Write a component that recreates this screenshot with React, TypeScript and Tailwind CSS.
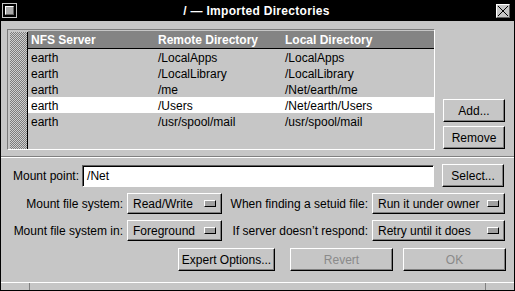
import React from "react";

const rows = [
  ["earth", "/LocalApps", "/LocalApps"],
  ["earth", "/LocalLibrary", "/LocalLibrary"],
  ["earth", "/me", "/Net/earth/me"],
  ["earth", "/Users", "/Net/earth/Users"],
  ["earth", "/usr/spool/mail", "/usr/spool/mail"],
];

const Btn = ({ label, w, dim }: { label: string; w: string; dim?: boolean }) => (
  <div
    className={`${w} h-[23px] flex items-center justify-center border border-t-white border-l-white border-r-black border-b-black shadow-[inset_-1px_-1px_0_#808080] ${
      dim ? "text-[#8a8a8a]" : "text-black"
    }`}
  >
    {label}
  </div>
);

const Popup = ({ label, w }: { label: string; w: string }) => (
  <div
    className={`${w} h-[21px] flex items-center justify-between pl-[5px] pr-[5px] border border-t-white border-l-white border-r-black border-b-black shadow-[inset_-1px_-1px_0_#808080]`}
  >
    <span>{label}</span>
    <span className="w-[12px] h-[7px] border border-t-white border-l-white border-r-black border-b-black bg-[#a0a0a0]" />
  </div>
);

export default function App() {
  return (
    <div className="w-[515px] h-[291px] border-x border-b border-black bg-[#c6c6c6] flex flex-col font-['Liberation_Sans',Arial,sans-serif] text-[12px] text-black leading-none">
      {/* title bar */}
      <div className="h-[21px] bg-black flex items-center shrink-0">
        <div className="ml-[1px] w-[15px] h-[15px] border border-[#c6c6c6] p-[2px]">
          <div className="w-full h-full bg-[#a8a8a8] border border-t-white border-l-white border-r-[#606060] border-b-[#606060]" />
        </div>
        <div className="flex-1 text-center text-white font-bold text-[12px] tracking-[0.3px]">
          / — Imported Directories
        </div>
        <div className="mr-[4px] w-[14px] h-[14px] bg-[#c6c6c6] border border-t-white border-l-white border-r-[#606060] border-b-[#606060] flex items-center justify-center">
          <svg width="12" height="12" viewBox="0 0 12 12">
            <path d="M1 1 L11 11 M11 1 L1 11" stroke="black" strokeWidth="1" />
          </svg>
        </div>
      </div>

      {/* list + buttons */}
      <div className="flex pt-[8px] pl-[6px] pr-[8px] gap-[8px]">
        <div className="w-[428px] h-[121px] border-t border-l border-[#7a7a7a] border-r border-b border-r-white border-b-white flex">
          <div className="w-[20px] border-l-2 border-t-2 border-l-[#c6c6c6] border-t-[#c6c6c6] flex">
            <div className="flex-1 bg-[repeating-conic-gradient(#7c7c7c_0%_25%,#cfcfcf_0%_50%)] bg-[length:2px_2px]" />
            <div className="w-[1px] bg-black" />
          </div>
          <div className="flex-1 flex flex-col pt-[1px]">
            <div className="h-[18px] bg-[#848484] border-b border-black flex items-center text-white font-bold">
              <div className="w-[127px] pl-[3px]">NFS Server</div>
              <div className="w-[127px] pl-[3px]">Remote Directory</div>
              <div className="pl-[3px]">Local Directory</div>
            </div>
            {rows.map((r, i) => (
              <div
                key={i}
                className={`h-[16px] pt-[1px] flex items-center ${i === 3 ? "bg-white" : ""}`}
              >
                <div className="w-[127px] pl-[3px]">{r[0]}</div>
                <div className="w-[127px] pl-[3px]">{r[1]}</div>
                <div className="pl-[3px]">{r[2]}</div>
              </div>
            ))}
          </div>
        </div>
        <div className="flex flex-col justify-end gap-[4px] pb-[1px]">
          <Btn label="Add..." w="w-[62px]" />
          <Btn label="Remove" w="w-[62px]" />
        </div>
      </div>

      {/* separator */}
      <div className="mt-[6px] h-[2px] border-t border-[#808080] border-b border-b-white" />

      {/* mount point */}
      <div className="flex items-center pt-[6px] pl-[12px] pr-[8px]">
        <span>Mount point:</span>
        <div className="ml-[3px] w-[352px] h-[22px] bg-white border border-t-[#606060] border-l-[#606060] border-r-white border-b-white shadow-[inset_1px_1px_0_#000] flex items-center pl-[4px]">
          /Net
        </div>
        <div className="ml-[8px]">
          <Btn label="Select..." w="w-[62px]" />
        </div>
      </div>

      {/* options */}
      <div className="flex items-center mt-[6px]">
        <div className="w-[122px] text-right">Mount file system:</div>
        <div className="ml-[4px]">
          <Popup label="Read/Write" w="w-[95px]" />
        </div>
        <div className="w-[146px] text-right">When finding a setuid file:</div>
        <div className="ml-[4px]">
          <Popup label="Run it under owner" w="w-[133px]" />
        </div>
      </div>
      <div className="flex items-center mt-[6px]">
        <div className="w-[122px] text-right">Mount file system in:</div>
        <div className="ml-[4px]">
          <Popup label="Foreground" w="w-[95px]" />
        </div>
        <div className="w-[146px] text-right">If server doesn’t respond:</div>
        <div className="ml-[4px]">
          <Popup label="Retry until it does" w="w-[133px]" />
        </div>
      </div>

      {/* action buttons */}
      <div className="flex justify-end gap-[10px] pr-[8px] mt-[7px]">
        <Btn label="Expert Options..." w="w-[97px]" />
        <div className="ml-[5px]">
          <Btn label="Revert" w="w-[103px]" dim />
        </div>
        <Btn label="OK" w="w-[103px]" dim />
      </div>

      {/* status bar */}
      <div className="mt-auto h-[8px] border-t border-white flex">
        <div className="w-[29px] border-r border-[#808080]" />
        <div className="flex-1 border-r border-[#808080]" />
        <div className="w-[28px]" />
      </div>
    </div>
  );
}
